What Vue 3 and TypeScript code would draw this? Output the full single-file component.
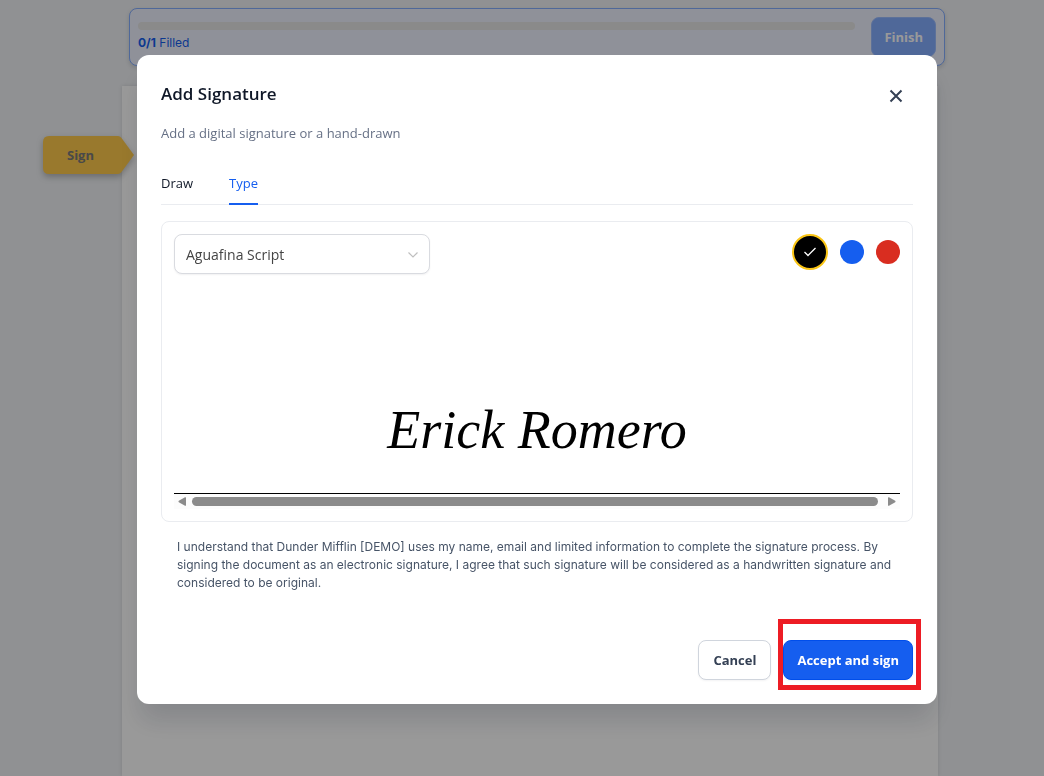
<script setup lang="ts">
import { ref } from 'vue'

interface Ink {
  name: string
  value: string
}

const signer = 'Erick Romero'
const fonts: string[] = ['Aguafina Script', 'Great Vibes', 'Dancing Script']
const inks: Ink[] = [
  { name: 'Black', value: '#000000' },
  { name: 'Blue', value: '#155eef' },
  { name: 'Red', value: '#d92d20' },
]
const tabs: string[] = ['Draw', 'Type']

const font = ref(fonts[0])
const ink = ref(inks[0].value)
const activeTab = ref('Type')
</script>

<template>
  <div class="app">
    <div class="topbar-wrap">
      <header class="topbar">
        <div class="progress">
          <div class="track"></div>
          <p class="filled"><b>0/1</b> Filled</p>
        </div>
        <button class="finish" type="button">Finish</button>
      </header>
    </div>
    <main class="document-wrap">
      <div class="document">
        <button class="sign-tag" type="button">
          <svg class="tag-shape" width="91" height="38" viewBox="0 0 91 38" aria-hidden="true">
            <path d="M6 0H75Q77 0 78.500 2L91 19L78.500 36Q77 38 75 38H6Q0 38 0 32V6Q0 0 6 0Z" fill="#ffca4b" />
          </svg>
          <span>Sign</span>
        </button>
      </div>
    </main>

    <div class="overlay">
      <section class="modal" role="dialog" aria-modal="true" aria-labelledby="dialog-title">
        <div class="modal-head">
          <h1 id="dialog-title">Add Signature</h1>
          <button class="close" type="button" aria-label="Close">
            <svg width="14" height="14" viewBox="0 0 14 14" aria-hidden="true">
              <path d="M1.500 1.500L12.500 12.500M12.500 1.500L1.500 12.500" stroke="#344054" stroke-width="2" fill="none" />
            </svg>
          </button>
        </div>
        <p class="subtitle">Add a digital signature or a hand-drawn</p>

        <div class="tabs" role="tablist">
          <button
            v-for="tab in tabs"
            :key="tab"
            type="button"
            role="tab"
            :aria-selected="tab === activeTab"
            :class="['tab', { active: tab === activeTab }]"
            @click="activeTab = tab"
          >{{ tab }}</button>
        </div>

        <div class="panel">
          <div class="tools">
            <div class="select-box">
              <select v-model="font" aria-label="Signature font">
                <option v-for="name in fonts" :key="name">{{ name }}</option>
              </select>
              <svg class="chevron" width="12" height="8" viewBox="0 0 12 8" aria-hidden="true">
                <path d="M1.500 1.500L6 6L10.500 1.500" stroke="#bfbfbf" stroke-width="1.200" fill="none" />
              </svg>
            </div>
            <div class="inks" role="radiogroup" aria-label="Ink colour">
              <label v-for="item in inks" :key="item.value" :class="['ink', { chosen: item.value === ink }]" :style="{ backgroundColor: item.value }">
                <input v-model="ink" type="radio" name="ink" :value="item.value" :aria-label="item.name" />
                <svg v-if="item.value === ink" width="14" height="12" viewBox="0 0 14 12" aria-hidden="true">
                  <path d="M1.500 6L5 9.500L12.500 2" stroke="#fff" stroke-width="1.300" fill="none" />
                </svg>
              </label>
            </div>
          </div>
          <div class="signature" :style="{ color: ink }">{{ signer }}</div>
          <div class="scrollbar" aria-hidden="true">
            <svg width="8" height="9" viewBox="0 0 8 9"><path d="M8 .8V8.200Q8 9 7 8.700L.8 5.200Q0 4.500 .8 3.800L7 .3Q8 0 8 .8Z" fill="#8b8b8b" /></svg>
            <div class="thumb"></div>
            <svg width="8" height="9" viewBox="0 0 8 9"><path d="M0 .8V8.200Q0 9 1 8.700L7.200 5.200Q8 4.500 7.200 3.800L1 .3Q0 0 0 .8Z" fill="#8b8b8b" /></svg>
          </div>
        </div>

        <p class="terms">
          I understand that Dunder Mifflin [DEMO] uses my name, email and limited information to complete the signature process. By
          signing the document as an electronic signature, I agree that such signature will be considered as a handwritten signature and
          considered to be original.
        </p>

        <div class="actions">
          <button class="btn cancel" type="button">Cancel</button>
          <div class="highlight">
            <button class="btn accept" type="button">Accept and sign</button>
          </div>
        </div>
      </section>
    </div>
  </div>
</template>

<style>
body {
  margin: 0;
  background: #f0f2f5;
}
</style>

<style scoped>
.app,
.app * {
  box-sizing: border-box;
}
.app {
  display: flex;
  flex-direction: column;
  min-height: 100vh;
  background: #f0f2f5;
  font-family: 'Open Sans', 'Noto Sans', sans-serif;
  font-size: 13px;
  color: #101828;
}
button,
select {
  font: inherit;
  cursor: pointer;
}
h1,
p {
  margin: 0;
}
.topbar-wrap {
  display: flex;
  justify-content: center;
  padding: 8px 0 0 30px;
}
.topbar {
  display: flex;
  gap: 16px;
  width: 100%;
  max-width: 816px;
  padding: 8px;
  border: 1px solid #84adff;
  border-radius: 8px;
  background: #eff2ff;
  box-shadow: 0 2px 4px rgba(16, 24, 40, 0.15);
}
.progress {
  flex: 1;
  padding-top: 5px;
}
.track {
  height: 8px;
  border-radius: 4px;
  background: #e6e6e6;
}
.filled {
  margin-top: 4px;
  font-family: Inter, sans-serif;
  font-size: 12px;
  line-height: 18px;
  color: #155eef;
}
.finish {
  height: 40px;
  padding: 0 12px;
  border: 1px solid #9bbcff;
  border-radius: 8px;
  background: #84adff;
  color: #fff;
  font-weight: 700;
}
.document-wrap {
  display: flex;
  flex: 1;
  justify-content: center;
  padding: 20px 0 0 16px;
}
.document {
  position: relative;
  width: 100%;
  max-width: 816px;
  background: #fff;
  box-shadow: 0 0 4px rgba(0, 0, 0, 0.12);
}
.sign-tag {
  position: absolute;
  top: 50px;
  left: -79px;
  width: 91px;
  height: 38px;
  padding: 0 16px 0 0;
  border: 0;
  background: none;
  font-weight: 700;
  color: #7a7a7a;
}
.sign-tag span {
  position: relative;
}
.tag-shape {
  position: absolute;
  top: 0;
  left: 0;
  overflow: visible;
  filter: drop-shadow(0 3px 3px rgba(0, 0, 0, 0.25));
}
.overlay {
  position: fixed;
  inset: 0;
  display: flex;
  align-items: flex-start;
  justify-content: center;
  padding: 55px 0 0 30px;
  background: rgba(0, 0, 0, 0.4);
  overflow: auto;
}
.modal {
  width: 100%;
  max-width: 800px;
  padding: 24px;
  border-radius: 12px;
  background: #fff;
  box-shadow: 0 20px 24px -4px rgba(16, 24, 40, 0.14);
}
.modal-head {
  display: flex;
  align-items: flex-start;
  justify-content: space-between;
}
h1 {
  font-size: 17px;
  font-weight: 600;
  line-height: 30px;
}
.close {
  display: flex;
  padding: 10px;
  margin: 0;
  border: 0;
  background: none;
}
.subtitle {
  margin-top: 10px;
  line-height: 20px;
  color: #667085;
}
.tabs {
  display: flex;
  gap: 36px;
  margin-top: 20px;
  box-shadow: inset 0 -1px #eaecf0;
}
.tab {
  height: 42px;
  padding: 0;
  border: 0;
  border-bottom: 2px solid transparent;
  background: none;
  color: #101828;
}
.tab.active {
  border-color: #155eef;
  color: #155eef;
}
.panel {
  margin-top: 16px;
  padding: 12px;
  border: 1px solid #eaecf0;
  border-radius: 8px;
}
.tools {
  display: flex;
  justify-content: space-between;
  align-items: flex-start;
}
.select-box {
  position: relative;
  width: 256px;
}
select {
  display: block;
  width: 100%;
  height: 40px;
  padding: 0 32px 0 11px;
  border: 1px solid #d9dbe0;
  border-radius: 8px;
  background: #fff;
  box-shadow: 0 1px 2px rgba(16, 24, 40, 0.06);
  appearance: none;
  font-size: 14px;
  color: #444;
}
.chevron {
  position: absolute;
  top: 17px;
  right: 11px;
  pointer-events: none;
}
.inks {
  display: flex;
  align-items: center;
  gap: 12px;
}
.ink {
  position: relative;
  display: flex;
  align-items: center;
  justify-content: center;
  width: 24px;
  height: 24px;
  border-radius: 50%;
}
.ink.chosen {
  width: 36px;
  height: 36px;
  border: 2px solid #fac515;
}
.ink input {
  position: absolute;
  inset: 0;
  margin: 0;
  opacity: 0;
}
.signature {
  height: 220px;
  padding-top: 116px;
  border-bottom: 1px solid #000;
  font-family: 'Liberation Serif', serif;
  font-size: 54px;
  font-style: italic;
  line-height: 80px;
  text-align: center;
  white-space: nowrap;
}
.scrollbar {
  display: flex;
  align-items: center;
  gap: 10px;
  height: 15px;
  padding: 0 4px;
  background: #fcfcfc;
}
.thumb {
  flex: 1;
  height: 9px;
  margin-left: -4px;
  border-radius: 5px;
  background: #8b8b8b;
}
.terms {
  margin-top: 16px;
  padding: 0 16px;
  font-family: Inter, sans-serif;
  font-size: 12px;
  line-height: 18px;
  color: #475467;
}
.actions {
  display: flex;
  justify-content: flex-end;
  gap: 12px;
  margin-top: 48px;
}
.btn {
  height: 40px;
  border-radius: 8px;
  font-weight: 700;
  box-shadow: 0 1px 2px rgba(16, 24, 40, 0.05);
}
.cancel {
  padding: 0 14px;
  border: 1px solid #d0d5dd;
  background: #fff;
  color: #344054;
}
.accept {
  padding: 0 13px;
  border: 1px solid #004eeb;
  background: #155eef;
  color: #fff;
}
.highlight {
  position: relative;
}
.highlight::after {
  content: '';
  position: absolute;
  inset: -21px -8px -10px -5px;
  border: 5px solid #ed1c24;
  pointer-events: none;
}
</style>
